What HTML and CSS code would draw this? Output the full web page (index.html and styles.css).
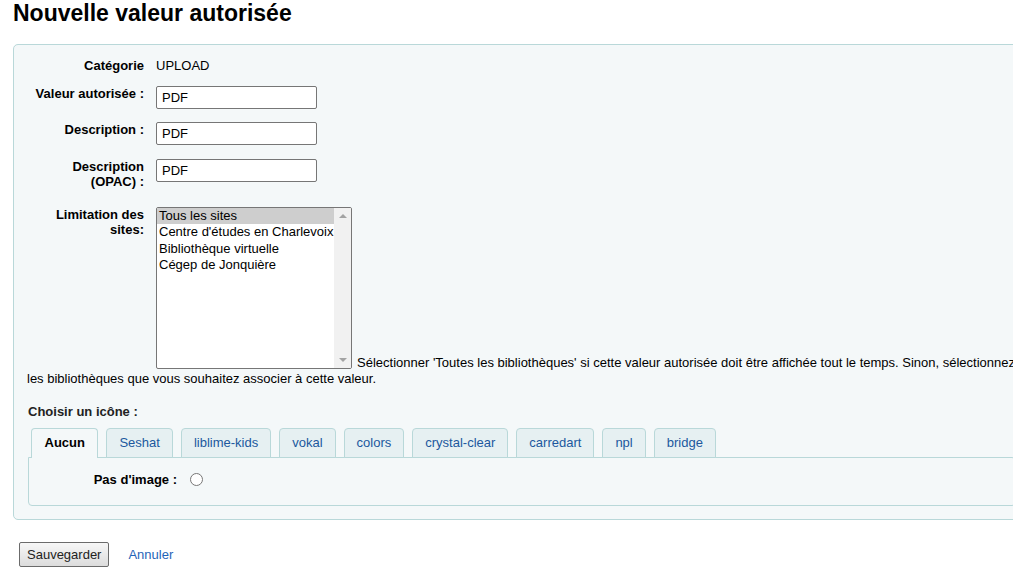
FILE: index.html
```html
<!DOCTYPE html>
<html lang="fr">
<head>
<meta charset="utf-8">
<title>Nouvelle valeur autorisée</title>
<link rel="stylesheet" href="styles.css">
</head>
<body>
<div class="page">
  <h1 class="title">Nouvelle valeur autorisée</h1>
  <form class="form">
    <fieldset class="rows">
      <ol class="row-list">
        <li class="row"><span class="lbl">Catégorie</span><span class="value">UPLOAD</span></li>
        <li class="row"><label class="lbl" for="v1">Valeur autorisée :</label><input class="field" id="v1" type="text" value="PDF"></li>
        <li class="row"><label class="lbl" for="v2">Description :</label><input class="field" id="v2" type="text" value="PDF"></li>
        <li class="row row-tall"><label class="lbl" for="v3">Description (OPAC) :</label><input class="field" id="v3" type="text" value="PDF"></li>
        <li class="row row-branches"><span class="lbl">Limitation des sites:</span><div class="listbox" role="listbox" aria-multiselectable="true"><div class="listbox-inner"><div class="options"><div class="option selected">Tous les sites</div><div class="option">Centre d'études en Charlevoix</div><div class="option">Bibliothèque virtuelle</div><div class="option">Cégep de Jonquière</div></div><div class="scrollbar"><span class="arrow up"></span><span class="arrow down"></span></div></div></div><span class="hint">Sélectionner 'Toutes les bibliothèques' si cette valeur autorisée doit être affichée tout le temps. Sinon, sélectionnez les bibliothèques que vous souhaitez associer à cette valeur.</span></li>
        <li class="row row-icons">
          <div class="icon-title">Choisir un icône :</div>
          <div class="tabs">
            <span class="tab active">Aucun</span>
            <a class="tab" href="#">Seshat</a>
            <a class="tab" href="#">liblime-kids</a>
            <a class="tab" href="#">vokal</a>
            <a class="tab" href="#">colors</a>
            <a class="tab" href="#">crystal-clear</a>
            <a class="tab" href="#">carredart</a>
            <a class="tab" href="#">npl</a>
            <a class="tab" href="#">bridge</a>
          </div>
          <div class="panel">
            <div class="panel-row"><label class="lbl" for="noimg">Pas d'image :</label><input class="radio" id="noimg" type="radio" name="icon"></div>
          </div>
        </li>
      </ol>
    </fieldset>
    <div class="actions">
      <button class="btn" type="button">Sauvegarder</button>
      <a class="cancel" href="#">Annuler</a>
    </div>
  </form>
</div>
</body>
</html>
```

FILE: styles.css
```css
html, body {
  overflow-x: hidden;
}
body {
  margin: 0;
  font-family: "Liberation Sans", Arial, sans-serif;
  font-size: 13px;
  color: #000;
  background: #fff;
}
.page {
  padding-left: 13px;
}
.title {
  margin: 0 0 17px;
  font-size: 23px;
  line-height: 27px;
  font-weight: bold;
}
.form {
  margin: 0;
}
.rows {
  box-sizing: border-box;
  width: 1017px;
  margin: 0;
  padding: 13px 13px 13px 13px;
  border: 1px solid #b9d8d9;
  border-radius: 5px;
  background: #f4f8f9;
  min-inline-size: 0;
}
.row-list {
  list-style: none;
  margin: 0;
  padding: 0;
}
.row {
  clear: both;
  padding: 0 0 13px;
  line-height: 15px;
}
.row::after {
  content: "";
  display: block;
  clear: both;
}
.row-tall {
  padding-top: 1px;
  padding-bottom: 18px;
}
.lbl {
  float: left;
  width: 117px;
  margin-right: 12px;
  text-align: right;
  font-weight: bold;
  line-height: 15px;
}
.field {
  box-sizing: border-box;
  width: 161px;
  height: 23px;
  margin: 0;
  padding: 0 5px;
  border: 1px solid #767676;
  border-radius: 2px;
  background: #fff;
  font: 13px "Liberation Sans", Arial, sans-serif;
  color: #000;
  vertical-align: top;
}
.row-branches {
  line-height: 16px;
}
.listbox {
  box-sizing: border-box;
  display: inline-block;
  width: 196px;
  height: 162px;
  margin-right: 5px;
  border: 1px solid #767676;
  border-radius: 2px;
  background: #fff;
  overflow: hidden;
  vertical-align: -2px;
}
.listbox-inner {
  display: flex;
  height: 100%;
  line-height: 16.3px;
}
.options {
  flex: 1;
  min-width: 0;
}
.option {
  padding: 0 2px;
  white-space: nowrap;
}
.option.selected {
  background: #cecece;
}
.scrollbar {
  width: 17px;
  background: #f1f1f1;
  display: flex;
  flex-direction: column;
  justify-content: space-between;
  align-items: center;
  padding: 6px 0;
  box-sizing: border-box;
}
.arrow {
  width: 0;
  height: 0;
  border-left: 4px solid transparent;
  border-right: 4px solid transparent;
}
.arrow.up {
  border-bottom: 4px solid #a3a3a3;
}
.arrow.down {
  border-top: 4px solid #a3a3a3;
}
.row-icons {
  padding: 4px 0 0;
}
.icon-title {
  margin: 0 0 9px 1px;
  font-weight: bold;
  color: #222;
}
.tabs {
  display: flex;
  align-items: flex-end;
  gap: 8px;
  margin: 0 0 -1px 1px;
  padding-left: 3px;
}
.tab {
  box-sizing: border-box;
  height: 30px;
  padding: 0 12px 1px;
  border: 1px solid #b9d8d9;
  border-radius: 4px 4px 0 0;
  background: #e6f0f2;
  color: #20589e;
  text-decoration: none;
  line-height: 27px;
}
.tab.active {
  border-bottom: none;
  background: #f4f8f9;
  color: #000;
  font-weight: bold;
  padding: 0 12.5px 2px;
}
.panel {
  margin-left: 1px;
  padding: 14px 0 18px 31px;
  border: 1px solid #b9d8d9;
  border-radius: 0 4px 4px 4px;
  background: #f4f8f9;
}
.panel-row {
  line-height: 15px;
}
.panel-row::after {
  content: "";
  display: block;
  clear: both;
}
.panel .lbl {
  margin-right: 13px;
}
.radio {
  width: 13px;
  height: 13px;
  margin: 1px 0 0;
  vertical-align: top;
}
.actions {
  display: flex;
  align-items: center;
  gap: 19px;
  padding: 22px 0 0 6px;
}
.btn {
  box-sizing: border-box;
  height: 25px;
  padding: 0 7px;
  border: 1px solid #6b6b6b;
  border-radius: 2px;
  background: linear-gradient(#f7f7f7, #dcdcdc);
  font: 13px "Liberation Sans", Arial, sans-serif;
  color: #222;
  line-height: 23px;
}
.cancel {
  color: #1f64b8;
  text-decoration: none;
}
```
